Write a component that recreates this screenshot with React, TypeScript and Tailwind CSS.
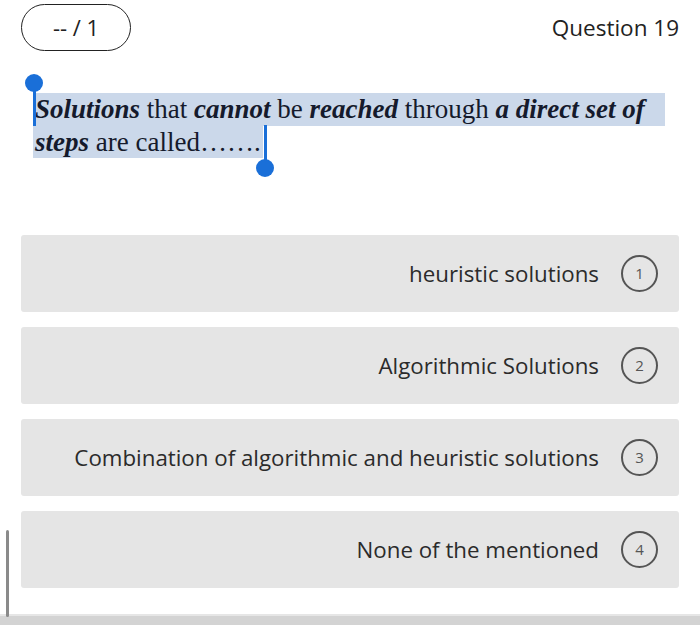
import React from 'react';

const choices = [
  'heuristic solutions',
  'Algorithmic Solutions',
  'Combination of algorithmic and heuristic solutions',
  'None of the mentioned',
];

function SelectionHandle({ flip }: { flip?: boolean }) {
  return (
    <div className={flip ? 'flex flex-col items-center' : 'flex flex-col-reverse items-center'}>
      <div className="h-[36px] w-[3px] bg-[#1a6fd8]" />
      <div className="h-[18px] w-[18px] rounded-full bg-[#1a6fd8] -my-[2px]" />
    </div>
  );
}

export default function App() {
  return (
    <div className="relative h-[625px] w-[700px] overflow-hidden bg-white" style={{ fontFamily: '"Open Sans", sans-serif' }}>
      {/* Header */}
      <div className="flex items-center justify-between px-[21px] pt-[4px]">
        <div className="flex h-[47px] w-[110px] items-center justify-center rounded-full border-[1.5px] border-[#222] text-[22px] text-[#222]">
          -- / 1
        </div>
        <div className="text-[22.5px] text-[#222]">Question 19</div>
      </div>

      {/* Question text with selection */}
      <div
        className="relative ml-[33px] mt-[42px] w-[632px] text-[27px] leading-[32.5px] text-[#151a2c]"
        style={{ fontFamily: '"Liberation Serif", serif' }}
      >
        <div className="bg-[#cbd8ea] pl-[2px] whitespace-nowrap">
          <b><i>Solutions</i></b> that <b><i>cannot</i></b> be <b><i>reached</i></b> through <b><i>a direct set of</i></b>
        </div>
        <div className="w-[230px] bg-[#cbd8ea] pl-[2px] whitespace-nowrap">
          <b><i>steps</i></b> are called…….
        </div>
        <div className="absolute -left-[9px] -top-[17px] w-[20px]">
          <SelectionHandle />
        </div>
        <div className="absolute left-[222px] top-[32px] w-[20px]">
          <SelectionHandle flip />
        </div>
      </div>

      {/* Choices */}
      <div className="mx-[21px] mt-[77px] flex flex-col gap-[15px]">
        {choices.map((c, i) => (
          <div key={c} className="flex h-[77px] items-center justify-end gap-[22px] rounded-[3px] bg-[#e5e5e5] pr-[21px]">
            <span className="text-[22.3px] text-[#2b2b2b]">{c}</span>
            <span className="flex h-[37px] w-[37px] items-center justify-center rounded-full border-[2px] border-[#555] text-[15px] text-[#555]">
              {i + 1}
            </span>
          </div>
        ))}
      </div>

      {/* Bottom bar */}
      <div className="mt-[26px] h-[12px] border-t-[2px] border-[#e6e6e6] bg-[#d3d3d3]" />

      {/* Scroll indicator */}
      <div className="absolute left-[6px] top-[530px] h-[87px] w-[3px] rounded-full bg-[#8a8a8a]" />
    </div>
  );
}
